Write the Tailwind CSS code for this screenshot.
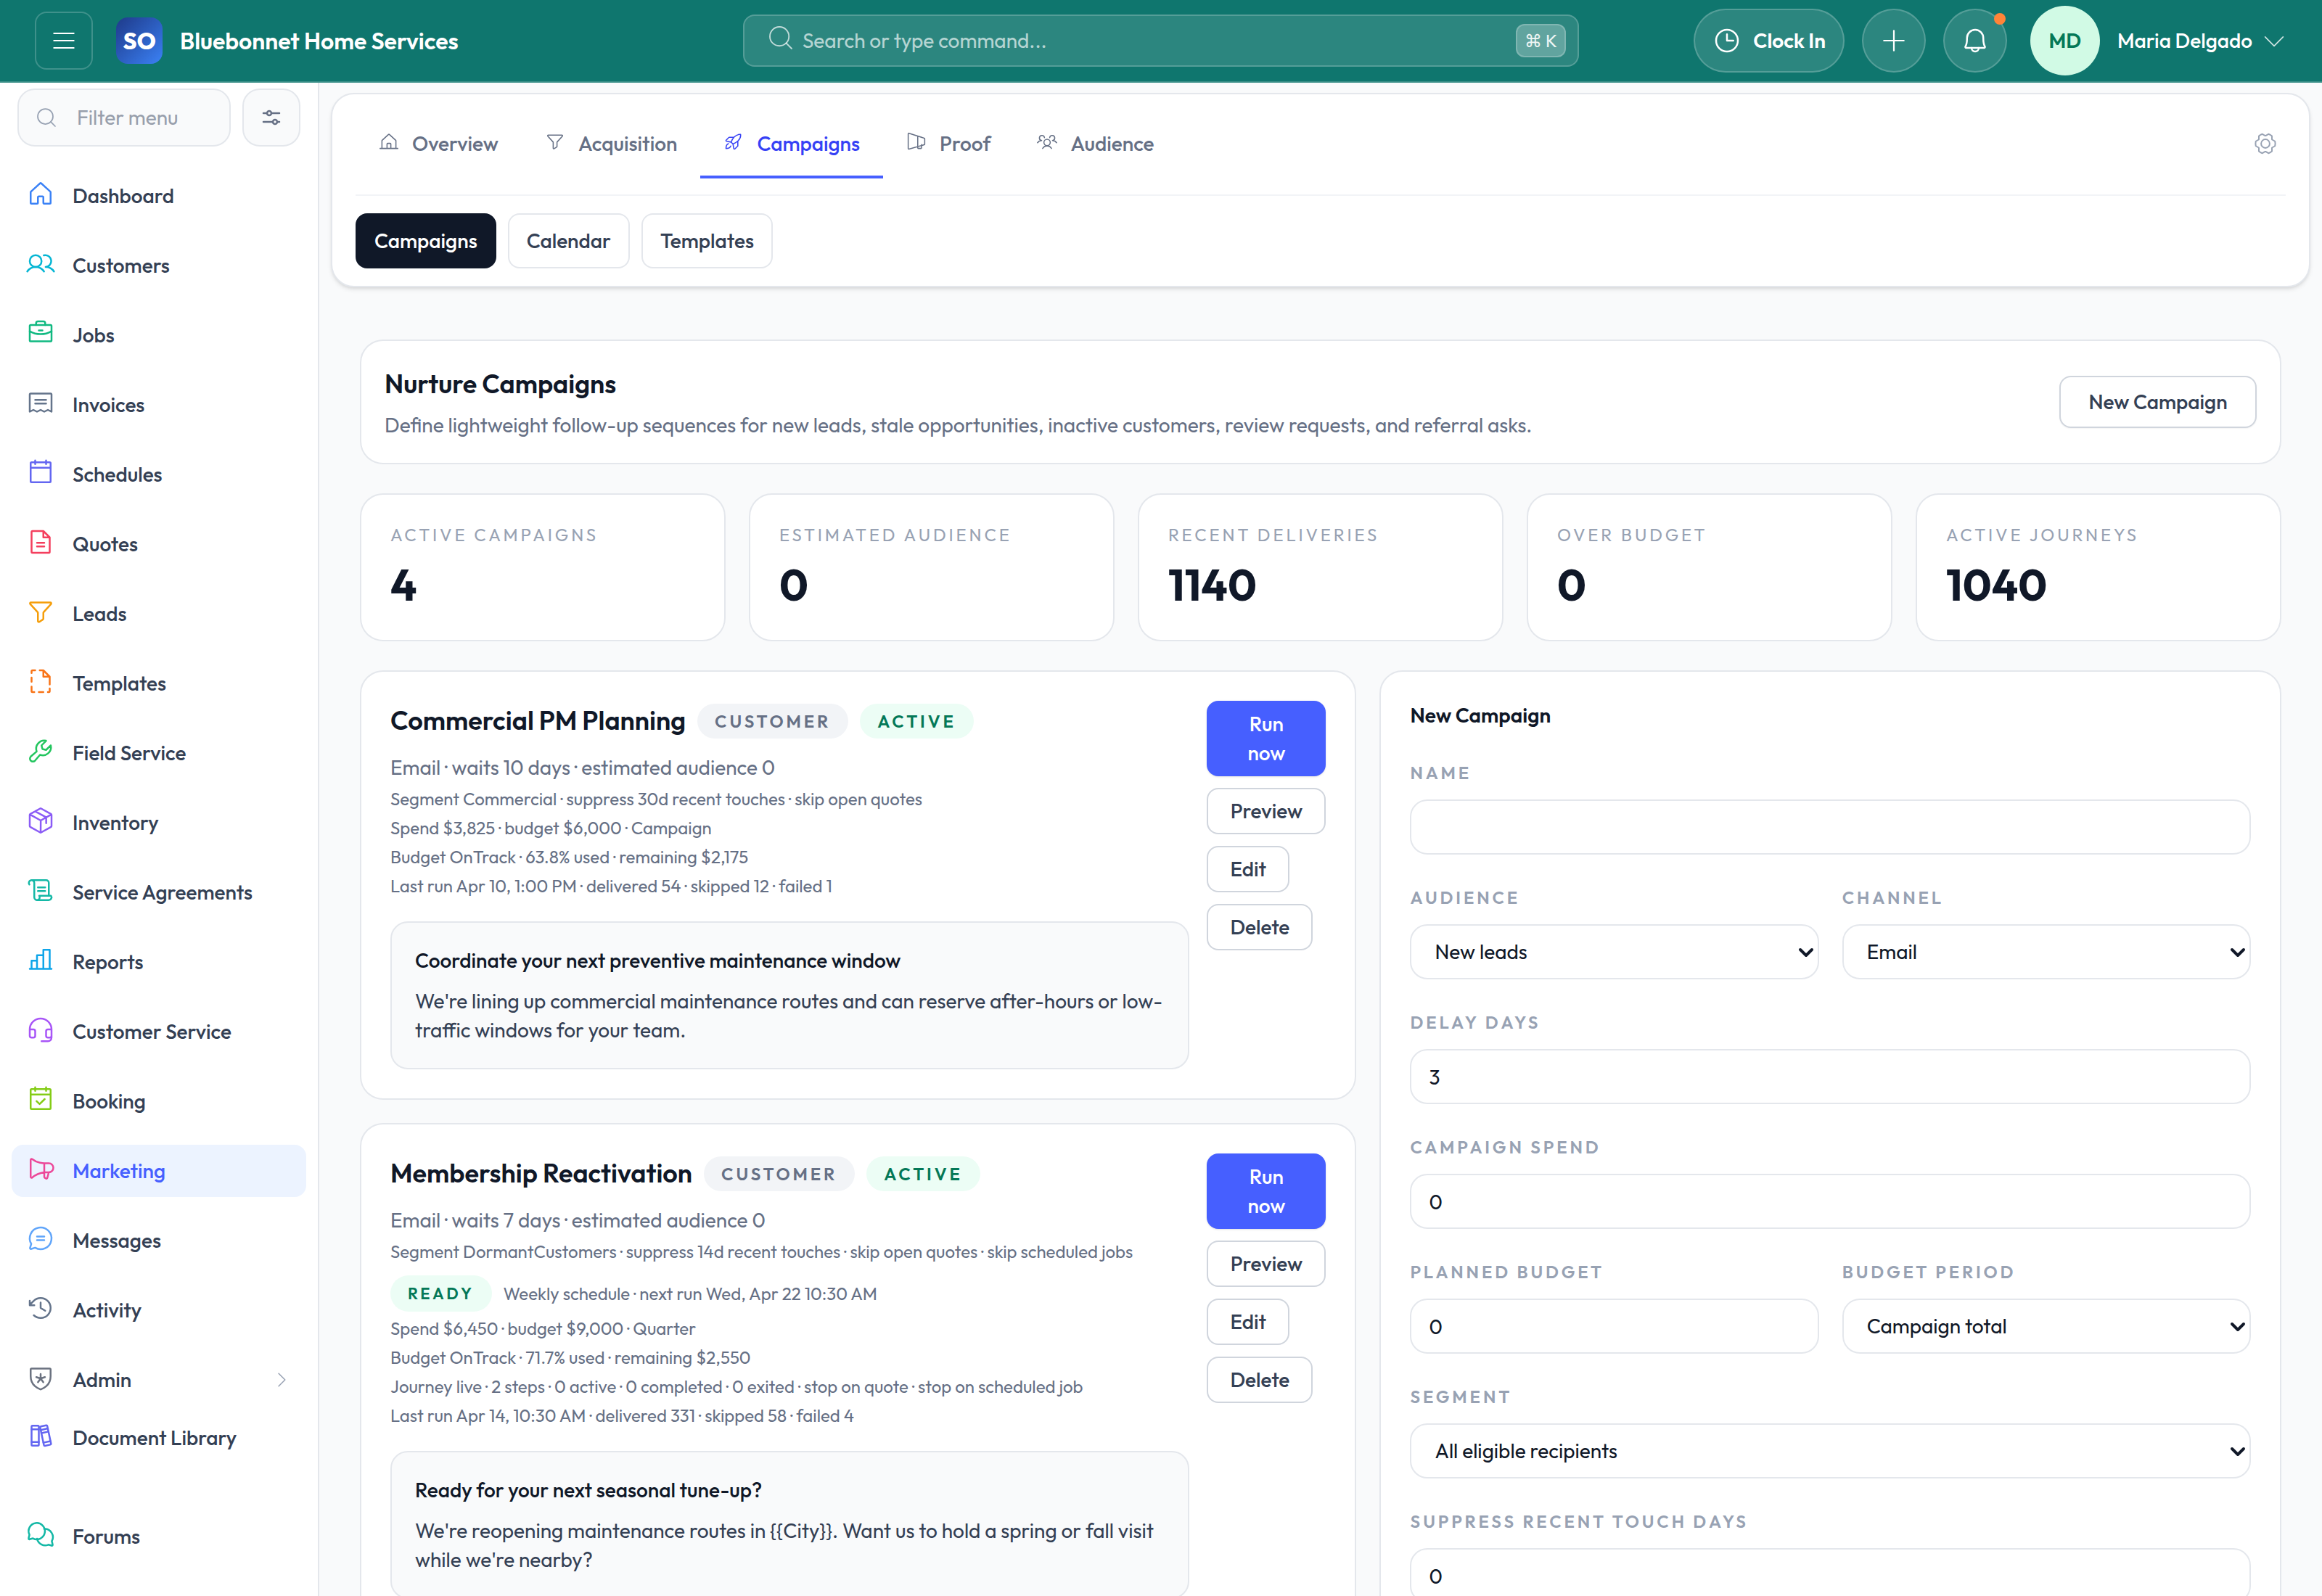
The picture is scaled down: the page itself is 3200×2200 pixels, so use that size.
<!DOCTYPE html>
<html lang="en">
<head>
  <meta charset="UTF-8" />
  <meta name="viewport" content="width=device-width, initial-scale=1.0" />
  <title>Campaigns - Bluebonnet Home Services</title>
  <script src="https://cdn.jsdelivr.net/npm/@tailwindcss/browser@4"></script>
</head>
<body class="flex h-screen flex-col overflow-hidden bg-[#f9fafb] font-['Outfit','Lato',sans-serif] text-[28px] leading-10 text-[#344054] [&_svg]:shrink-0 [&_svg]:fill-none [&_svg]:stroke-current [stroke-linecap:round] [stroke-linejoin:round]">

  <!-- Top bar -->
  <header class="grid h-[114px] shrink-0 grid-cols-[1fr_1152px_1fr] items-center border-b-2 border-[#3b8f88] bg-[#0f766e] px-12 text-white">
    <div class="flex items-center gap-8">
      <button type="button" aria-label="Toggle menu" class="flex size-20 items-center justify-center rounded-2xl border-2 border-white/20">
        <svg class="size-10" viewBox="0 0 256 256" stroke-width="12"><path d="M40,64H216M40,128H216M40,192H216"/></svg>
      </button>
      <a href="#" class="flex items-center gap-6">
        <span class="flex size-16 items-center justify-center rounded-2xl bg-linear-to-br from-[#1e3a8a] to-[#3b82f6] text-[32px] font-extrabold">SO</span>
        <span class="text-[32px] font-semibold">Bluebonnet Home Services</span>
      </a>
    </div>

    <label class="flex h-[72px] items-center gap-2.5 rounded-2xl border-2 border-white/20 bg-white/12 pr-4 pl-[30px]">
      <svg class="mb-2 size-10 text-white/70" viewBox="0 0 256 256" stroke-width="12"><circle cx="116" cy="116" r="84"/><path d="M175.4,175.4,224,224"/></svg>
      <input type="text" aria-label="Search" placeholder="Search or type command..." class="min-w-0 flex-1 bg-transparent outline-none placeholder:text-white/65" />
      <kbd class="flex h-[46px] items-center rounded-xl border-2 border-white/20 bg-white/25 px-2.5 font-['Outfit','Lato','DejaVu_Sans',sans-serif] text-2xl text-white/90">⌘ K</kbd>
    </label>

    <div class="flex items-center justify-end gap-6">
      <button type="button" class="flex h-[88px] items-center gap-4 rounded-full border-2 border-white/20 bg-white/12 px-6 font-semibold">
        <svg class="size-10" viewBox="0 0 256 256" stroke-width="16"><circle cx="128" cy="128" r="96"/><path d="M128,72V128H184"/></svg>
        Clock In
      </button>
      <button type="button" aria-label="Add" class="flex size-[88px] items-center justify-center rounded-full border-2 border-white/20 bg-white/12">
        <svg class="size-10" viewBox="0 0 256 256" stroke-width="14"><path d="M40,128H216M128,40V216"/></svg>
      </button>
      <button type="button" aria-label="Notifications" class="relative mr-2 flex size-[88px] items-center justify-center rounded-full border-2 border-white/20 bg-white/12">
        <svg class="size-10" viewBox="0 0 256 256" stroke-width="16"><path d="M56.2,104A71.9,71.9,0,0,1,128.6,32c39.6.3,71.3,33.2,71.3,72.9V112c0,35.8,7.5,56.6,14.1,68a8,8,0,0,1-6.9,12H49a8,8,0,0,1-6.9-12c6.6-11.4,14.1-32.2,14.1-68Z"/><path d="M96,192a32,32,0,0,0,64,0"/></svg>
        <span class="absolute top-1 right-0 size-4 rounded-full bg-[#ff8438]"></span>
      </button>
      <button type="button" class="flex items-center gap-6 font-medium">
        <span class="flex size-24 items-center justify-center rounded-full bg-[#d1fae5] font-semibold text-[#047857]">MD</span>
        <span class="flex items-center gap-3">Maria Delgado
          <svg class="size-9 text-white/80" viewBox="0 0 256 256" stroke-width="12"><path d="M216,92l-88,88L40,92"/></svg>
        </span>
      </button>
    </div>
  </header>

  <div class="flex min-h-0 flex-1">
    <!-- Sidebar -->
    <aside class="w-[440px] shrink-0 overflow-y-auto border-r-2 border-[#e4e7ec] bg-white pt-2 [scrollbar-width:none]">
      <div class="flex gap-4 px-6">
        <label class="flex h-20 min-w-0 flex-1 items-center gap-[26px] rounded-3xl border-2 border-[#e4e7ec] bg-[#f9fafb] pl-[22px] text-[#98a2b3]">
          <svg class="size-8" viewBox="0 0 256 256" stroke-width="14"><circle cx="116" cy="116" r="84"/><path d="M175.4,175.4,224,224"/></svg>
          <input type="text" aria-label="Filter menu" placeholder="Filter menu" class="w-full min-w-0 bg-transparent outline-none placeholder:text-[#989fac]" />
        </label>
        <button type="button" aria-label="Menu options" class="flex size-20 items-center justify-center rounded-3xl border-2 border-[#e4e7ec] bg-[#f9fafb] text-[#667085]">
          <svg class="size-8" viewBox="0 0 256 256" stroke-width="20"><path d="M128,80h88M40,80H80M192,176h24M40,176H144"/><circle cx="104" cy="80" r="24"/><circle cx="168" cy="176" r="24"/></svg>
        </button>
      </div>

      <nav class="mt-8 flex flex-col gap-6 px-4 font-medium [&_a]:flex [&_a]:h-[72px] [&_a]:items-center [&_a]:gap-6 [&_a]:rounded-2xl [&_a]:px-5">
        <a href="#"><svg class="mb-1.5 size-10 text-[#3b82f6]" viewBox="0 0 256 256" stroke-width="16"><path d="M152,208V160a8,8,0,0,0-8-8H112a8,8,0,0,0-8,8v48a8,8,0,0,1-8,8H48a8,8,0,0,1-8-8V115.5a8.3,8.3,0,0,1,2.6-5.9l80-72.7a8,8,0,0,1,10.8,0l80,72.7a8.3,8.3,0,0,1,2.6,5.9V208a8,8,0,0,1-8,8H160A8,8,0,0,1,152,208Z"/></svg>Dashboard</a>
        <a href="#"><svg class="mb-1.5 size-10 text-[#06b6d4]" viewBox="0 0 256 256" stroke-width="16"><circle cx="84" cy="108" r="52"/><path d="M10.2,200a88,88,0,0,1,147.6,0M155.4,57.9A52,52,0,1,1,172,160a87.9,87.9,0,0,1,73.8,40"/></svg>Customers</a>
        <a href="#"><svg class="mb-1.5 size-10 text-[#10b981]" viewBox="0 0 256 256" stroke-width="16"><rect x="32" y="58" width="192" height="144" rx="8"/><path d="M168,58V42a16,16,0,0,0-16-16H104A16,16,0,0,0,88,42V58M224,112.3A191.1,191.1,0,0,1,128,138a190.8,190.8,0,0,1-96-25.7M112,106h32"/></svg>Jobs</a>
        <a href="#"><svg class="mb-1.5 size-10 text-[#64748b]" viewBox="0 0 256 256" stroke-width="16"><path d="M32,208V56a8,8,0,0,1,8-8H216a8,8,0,0,1,8,8V208l-32-16-32,16-32-16L96,208,64,192ZM80,104h96M80,136h96"/></svg>Invoices</a>
        <a href="#"><svg class="mb-1.5 size-10 text-[#6366f1]" viewBox="0 0 256 256" stroke-width="16"><rect x="40" y="40" width="176" height="176" rx="8"/><path d="M176,24V56M80,24V56M40,88H216"/></svg>Schedules</a>
        <a href="#"><svg class="mb-1.5 size-10 text-[#f43f5e]" viewBox="0 0 256 256" stroke-width="16"><path d="M200,224H56a8,8,0,0,1-8-8V40a8,8,0,0,1,8-8h96l56,56V216A8,8,0,0,1,200,224ZM152,32V88h56M96,136h64M96,168h64"/></svg>Quotes</a>
        <a href="#"><svg class="mb-1.5 size-10 text-[#f59e0b]" viewBox="0 0 256 256" stroke-width="16"><path d="M42.1,48H213.9a8,8,0,0,1,5.9,13.4l-65.7,72.3a7.8,7.8,0,0,0-2.1,5.4v51.6a7.9,7.9,0,0,1-3.6,6.7l-32,21.3a8,8,0,0,1-12.4-6.6v-73a7.8,7.8,0,0,0-2.1-5.4L36.2,61.4A8,8,0,0,1,42.1,48Z"/></svg>Leads</a>
        <a href="#"><svg class="mb-1.5 size-10 text-[#f97316]" viewBox="0 0 256 256" stroke-width="16"><path d="M80,32H56a8,8,0,0,0-8,8V56M48,96v36M48,176v40a8,8,0,0,0,8,8H72M112,224h40M192,224h8a8,8,0,0,0,8-8V192M208,156V88L152,32H120M152,32V88h56"/></svg>Templates</a>
        <a href="#"><svg class="mb-1.5 size-10 text-[#22c55e]" viewBox="0 0 256 256" stroke-width="16"><path d="M176.4,38.6A72,72,0,0,0,93.2,133.5L41.4,178a26,26,0,1,0,36.8,36.8L122.5,162.8A72,72,0,0,0,217.4,79.6L176,120l-32-8-8-32Z"/></svg>Field Service</a>
        <a href="#"><svg class="mb-1.5 size-10 text-[#8b5cf6]" viewBox="0 0 256 256" stroke-width="16"><path d="M224,177.3V78.7a8.1,8.1,0,0,0-4.1-7l-88-49.5a7.8,7.8,0,0,0-7.8,0l-88,49.5a8.1,8.1,0,0,0-4.1,7v98.6a8.1,8.1,0,0,0,4.1,7l88,49.5a7.8,7.8,0,0,0,7.8,0l88-49.5A8.1,8.1,0,0,0,224,177.3ZM177,152.5v-52L80,47M222.9,74.6,128.9,128,33.1,74.6M128.9,128l-.9,106.8"/></svg>Inventory</a>
        <a href="#"><svg class="mb-1.5 size-10 text-[#14b8a6]" viewBox="0 0 256 256" stroke-width="16"><path d="M28.8,78.4A24,24,0,1,1,72,64V192a24,24,0,1,0,43.2-14.4H219.2A24,24,0,0,1,200,216H96M48,40H176a24,24,0,0,1,24,24V177.6M104,104h64M104,136h64"/></svg>Service Agreements</a>
        <a href="#"><svg class="mb-1.5 size-10 text-[#0ea5e9]" viewBox="0 0 256 256" stroke-width="16"><path d="M48,208V136H96M32,208H224M96,208V88h56M152,208V40h56V208"/></svg>Reports</a>
        <a href="#"><svg class="mb-1.5 size-10 text-[#a855f7]" viewBox="0 0 256 256" stroke-width="16"><path d="M224,128H192a16,16,0,0,0-16,16v40a16,16,0,0,0,16,16h16a16,16,0,0,0,16-16V128a96,96,0,0,0-192,0v56a16,16,0,0,0,16,16H64a16,16,0,0,0,16-16V144a16,16,0,0,0-16-16H32M224,184v16a32,32,0,0,1-32,32H136"/></svg>Customer Service</a>
        <a href="#"><svg class="mb-1.5 size-10 text-[#84cc16]" viewBox="0 0 256 256" stroke-width="16"><rect x="40" y="40" width="176" height="176" rx="8"/><path d="M176,24V56M80,24V56M40,88H216M92,146l27,26,45-44"/></svg>Booking</a>
        <a href="#" class="bg-[#ecf3ff] text-[#465fff]"><svg class="mb-1.5 size-10 text-[#ec4899]" viewBox="0 0 256 256" stroke-width="16"><path d="M160,80V200.7a7.9,7.9,0,0,0,3.6,6.6l11,7.3a8,8,0,0,0,12.2-4.7L200,160M40,200a8,8,0,0,0,13.1,6.2C97,169,160,160,160,160h40a40,40,0,0,0,0-80H160S97,79.9,53.1,43.2A8,8,0,0,0,40,49.4Z"/></svg>Marketing</a>
        <a href="#"><svg class="mb-1.5 size-10 text-[#60a5fa]" viewBox="0 0 256 256" stroke-width="16"><path d="M45.4,177A95.9,95.9,0,1,1,79,210.6L42,222a8,8,0,0,1-8-9ZM96,112h64M96,144h64"/></svg>Messages</a>
        <a href="#"><svg class="mb-1.5 size-10 text-[#64748b]" viewBox="0 0 256 256" stroke-width="16"><path d="M128,80v48l40,24M72,104H32V64M67.6,192A88,88,0,1,0,65.8,65.8L32,100"/></svg>Activity</a>
        <a href="#"><svg class="mb-1.5 size-10 text-[#6b7280]" viewBox="0 0 256 256" stroke-width="16"><path d="M40,114.7V56a8,8,0,0,1,8-8H208a8,8,0,0,1,8,8v58.7c0,84-71.3,111.8-85.5,116.5a7.2,7.2,0,0,1-5,0C111.3,226.5,40,198.7,40,114.7ZM128,96v40M90,123.6,128,136l38-12.4M104.5,168.4,128,136l23.5,32.4"/></svg>Admin
          <svg class="ml-auto size-7 text-[#98a2b3]" viewBox="0 0 256 256" stroke-width="14"><path d="M92,48l80,80L92,208"/></svg></a>
        <a href="#" class="-mt-4"><svg class="mb-1.5 size-10 text-[#6366f1]" viewBox="0 0 256 256" stroke-width="16"><rect x="48" y="40" width="64" height="176" rx="8"/><path d="M48,72h64M48,184h64"/><g transform="rotate(-12 172 128)"><rect x="140" y="40" width="64" height="174" rx="8"/><path d="M140,70h64M140,98h64M140,184h64"/></g></svg>Document Library</a>
        <a href="#" class="mt-10"><svg class="mb-1.5 size-10 text-[#14b8a6]" viewBox="0 0 256 256" stroke-width="16"><path d="M29.5,132A72,72,0,1,1,60,163.5L31,171.5a7,7,0,0,1-9-9Z"/><path d="M159,80.5A72,72,0,0,1,226.5,188l7.5,30.5a7,7,0,0,1-9,9L196,219.5A72,72,0,0,1,97,166"/></svg>Forums</a>
      </nav>
    </aside>

    <main class="min-w-0 flex-1 overflow-y-auto p-4 pt-3.5 [scrollbar-width:none]">
      <!-- Section tabs -->
      <section class="rounded-[32px] border-2 border-[#e4e7ec] bg-white px-8 py-6 shadow-md">
        <div class="flex items-center justify-between border-b-2 border-[#f2f4f7] pb-[22px]">
          <div class="flex font-medium text-[#667085] [&>a]:flex [&>a]:items-center [&>a]:gap-[18px] [&>a]:border-b-4 [&>a]:px-8 [&>a]:py-6">
            <a href="#" class="border-transparent"><svg class="mb-1.5 size-7" viewBox="0 0 256 256" stroke-width="14"><path d="M16,216H240M152,216V160a8,8,0,0,0-8-8H112a8,8,0,0,0-8,8v56M40,216V118.6a8.3,8.3,0,0,1,2.6-5.9l80-72.7a8,8,0,0,1,10.8,0l80,72.7a8.3,8.3,0,0,1,2.6,5.9V216"/></svg>Overview</a>
            <a href="#" class="border-transparent"><svg class="mb-1.5 size-7" viewBox="0 0 256 256" stroke-width="14"><path d="M42.1,48H213.9a8,8,0,0,1,5.9,13.4l-65.7,72.3a7.8,7.8,0,0,0-2.1,5.4v51.6a7.9,7.9,0,0,1-3.6,6.7l-32,21.3a8,8,0,0,1-12.4-6.6v-73a7.8,7.8,0,0,0-2.1-5.4L36.2,61.4A8,8,0,0,1,42.1,48Z"/></svg>Acquisition</a>
            <a href="#" class="border-[#465fff] text-[#3641f5]"><svg class="mb-1.5 size-7" viewBox="0 0 256 256" stroke-width="14"><path d="M96,136c14-38,54-104,120-96,8,66-58,106-96,120ZM133,75H74a8,8,0,0,0-6,2.5L34,112a8,8,0,0,0,4,13.5L96,136M181,123v59a8,8,0,0,1-2.5,6L144,222a8,8,0,0,1-13.5-4L120,160M92,185c-8,24-26,31-60,31,0-34,7-52,31-60M120,160,96,136"/></svg>Campaigns</a>
            <a href="#" class="border-transparent"><svg class="mb-1.5 size-7" viewBox="0 0 256 256" stroke-width="14"><path d="M144,71V185M192,168v40a8,8,0,0,1-8,8H152a8,8,0,0,1-8-8V182M24,32V216a8,8,0,0,0,10.2,7.7l192-53.8a8,8,0,0,0,5.8-7.7V94a8,8,0,0,0-5.8-7.7L34.2,24.3A8,8,0,0,0,24,32Z"/></svg>Proof</a>
            <a href="#" class="border-transparent"><svg class="mb-1.5 size-7" viewBox="0 0 256 256" stroke-width="14"><circle cx="128" cy="140" r="40"/><path d="M72,216a65,65,0,0,1,112,0M196,116a60,60,0,0,1,52,28M8,144a60,60,0,0,1,52-28M161,80a32,32,0,1,1,35,36M60,116A32,32,0,1,1,95,80"/></svg>Audience</a>
          </div>
          <button type="button" aria-label="Settings" class="mb-1 p-2.5 text-[#98a2b3]">
            <svg class="size-9" viewBox="0 0 256 256" stroke-width="14"><circle cx="128" cy="128" r="42"/><path d="M130,206c-1,0-3,0-4,0L98,222a100,100,0,0,1-34-19V171a68,68,0,0,1-2-4L34,151a98,98,0,0,1,0-46L62,89l2-4V53A100,100,0,0,1,98,34l28,16h4l28-16a100,100,0,0,1,34,19V85l2,4,28,16a98,98,0,0,1,0,46l-28,16-2,4v32a100,100,0,0,1-34,19Z"/></svg>
          </button>
        </div>
        <div class="mt-6 flex gap-4 font-medium">
          <a href="#" class="rounded-2xl border-2 border-[#101828] bg-[#101828] px-6 py-4 text-white">Campaigns</a>
          <a href="#" class="rounded-2xl border-2 border-[#e4e7ec] px-6 py-4">Calendar</a>
          <a href="#" class="rounded-2xl border-2 border-[#e4e7ec] px-6 py-4">Templates</a>
        </div>
      </section>

      <div class="mt-[72px] flex flex-col gap-10 px-10 pb-10">
        <section class="flex items-center justify-between rounded-[32px] border-2 border-[#e4e7ec] bg-white p-8">
          <div>
            <h1 class="pb-0.5 text-4xl leading-[54px] font-semibold text-[#101828]">Nurture Campaigns</h1>
            <p class="mt-2 text-[#667085]">Define lightweight follow-up sequences for new leads, stale opportunities, inactive customers, review requests, and referral asks.</p>
          </div>
          <button type="button" class="h-[72px] w-[272px] rounded-2xl border-2 border-[#d0d5dd] bg-white font-medium shadow-xs">New Campaign</button>
        </section>

        <!-- Totals -->
        <dl class="grid grid-cols-5 gap-8 [&_dd]:mt-[18px] [&_dd]:text-6xl [&_dd]:leading-18 [&_dd]:font-bold [&_dd]:text-[#101828] [&_dt]:text-2xl [&_dt]:leading-[30px] [&_dt]:tracking-[0.16em] [&_dt]:text-[#98a2b3] [&_dt]:uppercase [&>div]:rounded-[32px] [&>div]:border-2 [&>div]:border-[#e4e7ec] [&>div]:bg-white [&>div]:p-10">
          <div><dt>Active campaigns</dt><dd>4</dd></div>
          <div><dt>Estimated audience</dt><dd>0</dd></div>
          <div><dt>Recent deliveries</dt><dd>1140</dd></div>
          <div><dt>Over budget</dt><dd>0</dd></div>
          <div><dt>Active journeys</dt><dd>1040</dd></div>
        </dl>

        <div class="grid grid-cols-[1.05fr_0.95fr] items-start gap-8">
          <div class="flex min-w-0 flex-col gap-8">
            <article class="flex items-start gap-6 rounded-[32px] border-2 border-[#e4e7ec] bg-white p-10">
              <div class="min-w-0 flex-1 text-[#667085]">
                <div class="flex items-center gap-4">
                  <h2 class="pb-0.5 text-4xl leading-[54px] font-semibold text-[#101828]">Commercial PM Planning</h2>
                  <span class="rounded-full bg-[#f2f4f7] px-6 py-2 text-2xl font-semibold tracking-[0.16em] uppercase">Customer</span>
                  <span class="rounded-full bg-[#ecfdf5] px-6 py-2 text-2xl font-semibold tracking-[0.16em] text-[#047857] uppercase">Active</span>
                </div>
                <p class="mt-4">Email · waits 10 days · estimated audience 0</p>
                <p class="mt-1.5 text-2xl leading-[34px]">Segment Commercial · suppress 30d recent touches · skip open quotes</p>
                <p class="mt-1.5 text-2xl leading-[34px]">Spend $3,825 · budget $6,000 · Campaign</p>
                <p class="mt-1.5 text-2xl leading-[34px]">Budget OnTrack · 63.8% used · remaining $2,175</p>
                <p class="mt-1.5 text-2xl leading-[34px]">Last run Apr 10, 1:00 PM · delivered 54 · skipped 12 · failed 1</p>
                <div class="mt-8 rounded-3xl border-2 border-[#e4e7ec] bg-[#f9fafb] p-8 text-[#344054]">
                  <h3 class="font-medium text-[#101828]">Coordinate your next preventive maintenance window</h3>
                  <p class="mt-4">We're lining up commercial maintenance routes and can reserve after-hours or low-traffic windows for your team.</p>
                </div>
              </div>
              <div class="flex w-[164px] flex-col items-start gap-4 font-medium [&>button]:rounded-2xl">
                <button type="button" class="w-full bg-[#465fff] px-10 py-3 text-white shadow-sm">Run now</button>
                <button type="button" class="w-full border-2 border-[#d0d5dd] py-2.5">Preview</button>
                <button type="button" class="border-2 border-[#d0d5dd] px-[30px] py-2.5">Edit</button>
                <button type="button" class="border-2 border-[#d0d5dd] px-[30px] py-2.5">Delete</button>
              </div>
            </article>

            <article class="flex items-start gap-6 rounded-[32px] border-2 border-[#e4e7ec] bg-white p-10">
              <div class="min-w-0 flex-1 text-[#667085]">
                <div class="flex items-center gap-4">
                  <h2 class="pb-0.5 text-4xl leading-[54px] font-semibold text-[#101828]">Membership Reactivation</h2>
                  <span class="rounded-full bg-[#f2f4f7] px-6 py-2 text-2xl font-semibold tracking-[0.16em] uppercase">Customer</span>
                  <span class="rounded-full bg-[#ecfdf5] px-6 py-2 text-2xl font-semibold tracking-[0.16em] text-[#047857] uppercase">Active</span>
                </div>
                <p class="mt-4">Email · waits 7 days · estimated audience 0</p>
                <p class="mt-1.5 text-2xl leading-[34px]">Segment DormantCustomers · suppress 14d recent touches · skip open quotes · skip scheduled jobs</p>
                <p class="mt-4 flex items-center gap-4 text-2xl leading-[34px]">
                  <span class="rounded-full bg-[#ecfdf5] px-6 py-2 text-[22px] font-semibold tracking-[0.16em] text-[#047857] uppercase">Ready</span>
                  Weekly schedule · next run Wed, Apr 22 10:30 AM
                </p>
                <p class="mt-1.5 text-2xl leading-[34px]">Spend $6,450 · budget $9,000 · Quarter</p>
                <p class="mt-1.5 text-2xl leading-[34px]">Budget OnTrack · 71.7% used · remaining $2,550</p>
                <p class="mt-1.5 text-2xl leading-[34px]">Journey live · 2 steps · 0 active · 0 completed · 0 exited · stop on quote · stop on scheduled job</p>
                <p class="mt-1.5 text-2xl leading-[34px]">Last run Apr 14, 10:30 AM · delivered 331 · skipped 58 · failed 4</p>
                <div class="mt-8 rounded-3xl border-2 border-[#e4e7ec] bg-[#f9fafb] p-8 text-[#344054]">
                  <h3 class="font-medium text-[#101828]">Ready for your next seasonal tune-up?</h3>
                  <p class="mt-4">We're reopening maintenance routes in {{City}}. Want us to hold a spring or fall visit while we're nearby?</p>
                </div>
              </div>
              <div class="flex w-[164px] flex-col items-start gap-4 font-medium [&>button]:rounded-2xl">
                <button type="button" class="w-full bg-[#465fff] px-10 py-3 text-white shadow-sm">Run now</button>
                <button type="button" class="w-full border-2 border-[#d0d5dd] py-2.5">Preview</button>
                <button type="button" class="border-2 border-[#d0d5dd] px-[30px] py-2.5">Edit</button>
                <button type="button" class="border-2 border-[#d0d5dd] px-[30px] py-2.5">Delete</button>
              </div>
            </article>
          </div>

          <!-- Campaign form -->
          <form class="grid grid-cols-2 gap-x-8 gap-y-10 rounded-[32px] border-2 border-[#e4e7ec] bg-white p-10 text-[#101828] [&_input]:mt-[18px] [&_input]:h-[76px] [&_input]:w-full [&_input]:rounded-3xl [&_input]:border-2 [&_input]:border-[#e4e7ec] [&_input]:px-6 [&_label]:block [&_label]:text-2xl [&_label]:leading-[38px] [&_label]:font-semibold [&_label]:tracking-[0.16em] [&_label]:text-[#98a2b3] [&_label]:uppercase [&_select]:h-[76px] [&_select]:w-full [&_select]:appearance-none [&_select]:rounded-3xl [&_select]:border-2 [&_select]:border-[#e4e7ec] [&_select]:px-8">
            <h2 class="col-span-2 font-semibold">New Campaign</h2>
            <div class="col-span-2">
              <label for="name">Name</label>
              <input id="name" type="text" />
            </div>
            <div>
              <label for="audience">Audience</label>
              <div class="relative mt-[18px]">
                <select id="audience"><option>New leads</option></select>
                <svg class="pointer-events-none absolute top-7 right-1.5 size-6" viewBox="0 0 24 24" stroke-width="4"><path d="M4,7l8,8,8-8"/></svg>
              </div>
            </div>
            <div>
              <label for="channel">Channel</label>
              <div class="relative mt-[18px]">
                <select id="channel"><option>Email</option></select>
                <svg class="pointer-events-none absolute top-7 right-1.5 size-6" viewBox="0 0 24 24" stroke-width="4"><path d="M4,7l8,8,8-8"/></svg>
              </div>
            </div>
            <div class="col-span-2">
              <label for="delay">Delay days</label>
              <input id="delay" type="text" inputmode="numeric" value="3" />
            </div>
            <div class="col-span-2">
              <label for="spend">Campaign spend</label>
              <input id="spend" type="text" inputmode="numeric" value="0" />
            </div>
            <div>
              <label for="budget">Planned budget</label>
              <input id="budget" type="text" inputmode="numeric" value="0" />
            </div>
            <div>
              <label for="period">Budget period</label>
              <div class="relative mt-[18px]">
                <select id="period"><option>Campaign total</option></select>
                <svg class="pointer-events-none absolute top-7 right-1.5 size-6" viewBox="0 0 24 24" stroke-width="4"><path d="M4,7l8,8,8-8"/></svg>
              </div>
            </div>
            <div class="col-span-2">
              <label for="segment">Segment</label>
              <div class="relative mt-[18px]">
                <select id="segment"><option>All eligible recipients</option></select>
                <svg class="pointer-events-none absolute top-7 right-1.5 size-6" viewBox="0 0 24 24" stroke-width="4"><path d="M4,7l8,8,8-8"/></svg>
              </div>
            </div>
            <div class="col-span-2">
              <label for="suppress">Suppress recent touch days</label>
              <input id="suppress" type="text" inputmode="numeric" value="0" />
            </div>
          </form>
        </div>
      </div>
    </main>
  </div>
</body>
</html>
